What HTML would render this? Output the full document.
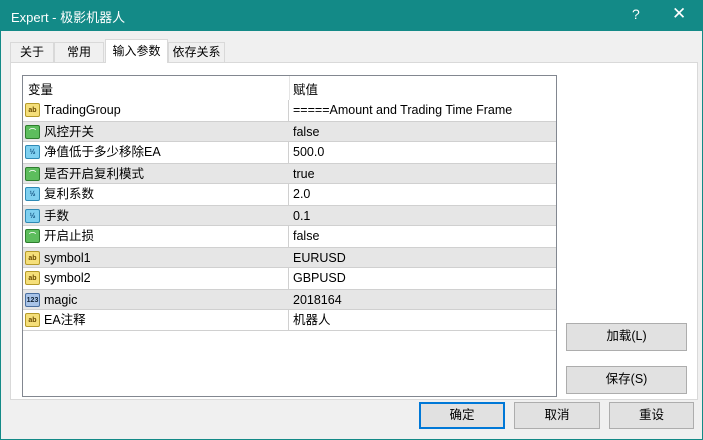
<!DOCTYPE html><html><head><meta charset="utf-8"><style>
*{box-sizing:border-box}
body{margin:0;width:703px;height:440px;overflow:hidden;font-family:"Liberation Sans","Noto Sans CJK SC",sans-serif;font-size:12px;color:#000}
.win{position:absolute;left:0;top:0;width:703px;height:440px;background:#f0f0f0;border:1px solid #138a87;border-top:none}
.title{position:absolute;left:0;top:0;width:703px;height:31px;background:#138a87;color:#fff;font-size:13px}
.abs{position:absolute}
.tab{position:absolute;top:42px;height:20px;background:#f0f0f0;border:1px solid #d9d9d9;border-bottom:none;text-align:center;line-height:19px}
.panel{position:absolute;left:9px;top:62px;width:688px;height:338px;background:#fff;border:1px solid #d9d9d9}
.list{position:absolute;left:21px;top:75px;width:535px;height:322px;border:1px solid #828790;background:#fff}
.row{position:absolute;left:0;width:533px;height:21px;line-height:20px;font-size:12.5px}
.row.g{background:#e6e6e6;border-top:1px solid #d0d0d0;border-bottom:1px solid #d0d0d0}
.row .n{position:absolute;left:21px}
.row .v{position:absolute;left:270px}
.ic{position:absolute;left:2px;top:3px;width:15px;height:14px;border-radius:2px;font-size:7px;line-height:13px;text-align:center;font-weight:bold}
.ab{background:#f5df7a;border:1px solid #b59a2a;color:#6a4a00}
.bo{background:#5dbd5d;border:1px solid #2d7d2d;color:#fff}
.fl{background:#7fd0f0;border:1px solid #2f8ab5;color:#0c4a7a}
.in{background:#a9c4e8;border:1px solid #4a6fa0;color:#123}
.btn{position:absolute;background:#e1e1e1;border:1px solid #adadad;text-align:center;line-height:25px;font-size:12.5px}
</style></head><body><div class="win">
<div class="title"><span class="abs" style="left:10px;top:7px">Expert - 极影机器人</span><span class="abs" style="left:631px;top:6px;font-size:14px">?</span><span class="abs" style="left:671px;top:4px;font-size:17px">✕</span></div>
<div class="panel"></div>
<div class="tab" style="left:9px;width:44px">关于</div>
<div class="tab" style="left:53px;width:50px">常用</div>
<div class="tab" style="left:104px;top:39px;height:24px;width:63px;background:#fff;line-height:22px;z-index:2">输入参数</div>
<div class="tab" style="left:167px;width:57px">依存关系</div>
<div class="list">
<div class="abs" style="left:5px;top:3px;font-size:12.5px">变量</div>
<div class="abs" style="left:266px;top:0;width:1px;height:24px;background:#e5e5e5"></div>
<div class="abs" style="left:270px;top:3px;font-size:12.5px">赋值</div>
<div class="abs" style="left:265px;top:24px;width:1px;height:231px;background:#d0d0d0"></div>
<div class="row" style="top:24px"><span class="ic ab">ab</span><span class="n">TradingGroup</span><span class="v">=====Amount and Trading Time Frame</span></div>
<div class="row g" style="top:45px"><span class="ic bo">⌒</span><span class="n">风控开关</span><span class="v">false</span></div>
<div class="row" style="top:66px"><span class="ic fl">½</span><span class="n">净值低于多少移除EA</span><span class="v">500.0</span></div>
<div class="row g" style="top:87px"><span class="ic bo">⌒</span><span class="n">是否开启复利模式</span><span class="v">true</span></div>
<div class="row" style="top:108px"><span class="ic fl">½</span><span class="n">复利系数</span><span class="v">2.0</span></div>
<div class="row g" style="top:129px"><span class="ic fl">½</span><span class="n">手数</span><span class="v">0.1</span></div>
<div class="row" style="top:150px"><span class="ic bo">⌒</span><span class="n">开启止损</span><span class="v">false</span></div>
<div class="row g" style="top:171px"><span class="ic ab">ab</span><span class="n">symbol1</span><span class="v">EURUSD</span></div>
<div class="row" style="top:192px"><span class="ic ab">ab</span><span class="n">symbol2</span><span class="v">GBPUSD</span></div>
<div class="row g" style="top:213px"><span class="ic in">123</span><span class="n">magic</span><span class="v">2018164</span></div>
<div class="row" style="top:234px;border-bottom:1px solid #d0d0d0"><span class="ic ab">ab</span><span class="n">EA注释</span><span class="v">机器人</span></div>
</div>
<div class="btn" style="left:565px;top:323px;width:121px;height:28px">加载(L)</div>
<div class="btn" style="left:565px;top:366px;width:121px;height:28px">保存(S)</div>
<div class="btn" style="left:418px;top:402px;width:86px;height:27px;border:2px solid #0078d7;line-height:23px">确定</div>
<div class="btn" style="left:513px;top:402px;width:86px;height:27px">取消</div>
<div class="btn" style="left:608px;top:402px;width:85px;height:27px">重设</div>
</div></body></html>
